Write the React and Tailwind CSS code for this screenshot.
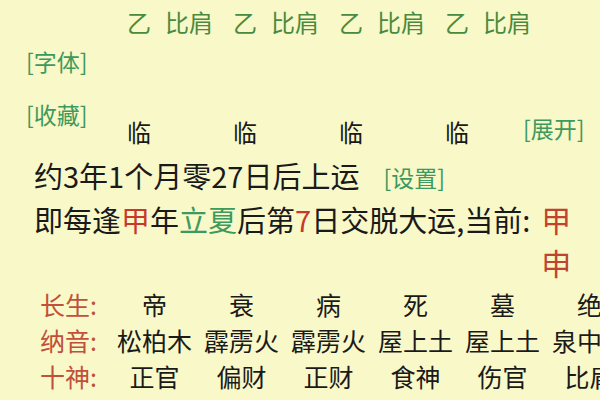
import React from "react";

const font = { fontFamily: '"Noto Sans CJK SC", "Noto Sans", sans-serif' };

function Row({ label, items }) {
  return (
    <div className="flex items-center h-[36px]">
      <div className="w-[111px] shrink-0 pl-[40px] text-[25px] text-[#c0503a] leading-none">{label}</div>
      {items.map((t, i) => (
        <div key={i} className="w-[87px] shrink-0 text-center text-[25px] text-[#1a1a1a] leading-none whitespace-nowrap">
          {t}
        </div>
      ))}
    </div>
  );
}

export default function App() {
  return (
    <div style={font} className="w-[600px] h-[400px] overflow-hidden bg-[#f9f8c9] flex flex-col">
      {/* Top row */}
      <div className="flex pl-[127px] pt-[4px] h-[40px] items-center">
        {[0, 1, 2, 3].map((i) => (
          <div key={i} className="w-[106px] shrink-0 flex items-center gap-[14px] text-[24px] leading-none text-[#4a8a3e] whitespace-nowrap">
            <span>乙</span>
            <span>比肩</span>
          </div>
        ))}
      </div>

      {/* Links + 临 row */}
      <div className="flex h-[110px]">
        <div className="w-[127px] shrink-0 pl-[26px] flex flex-col text-[23px] leading-none text-[#3d9a5e]">
          <div className="mt-[10px]">[字体]</div>
          <div className="mt-[30px]">[收藏]</div>
        </div>
        <div className="flex items-end pb-[6px]">
          {[0, 1, 2, 3].map((i) => (
            <div key={i} className="w-[106px] shrink-0 text-[24px] leading-none text-[#1a1a1a]">临</div>
          ))}
          <div className="ml-[-28px] text-[23px] leading-none text-[#3d9a5e] mb-[4px]">[展开]</div>
        </div>
      </div>

      {/* 约 line */}
      <div className="flex items-center pl-[34px] h-[48px] pt-[2px] whitespace-nowrap">
        <span className="text-[29px] leading-none text-[#1a1a1a]">约3年1个月零27日后上运</span>
        <span className="ml-[24px] mt-[4px] text-[23px] leading-none text-[#3d9a5e]">[设置]</span>
      </div>

      {/* 即 line */}
      <div className="flex items-start pl-[34px] whitespace-nowrap h-[82px]">
        <span className="text-[29px] leading-[42px] text-[#1a1a1a]">
          即每逢<span className="text-[#c8392b]">甲</span>年<span className="text-[#3d9a5e]">立夏</span>后第<span className="text-[#c8392b]">7</span>日交脱大运,当前:
        </span>
        <div className="ml-[11px] flex flex-col text-[30px] leading-[43px] text-[#c0432f]">
          <span>甲</span>
          <span>申</span>
        </div>
      </div>

      {/* Table */}
      <div className="flex flex-col mt-[6px]">
        <Row label="长生:" items={["帝", "衰", "病", "死", "墓", "绝"]} />
        <Row label="纳音:" items={["松柏木", "霹雳火", "霹雳火", "屋上土", "屋上土", "泉中水"]} />
        <Row label="十神:" items={["正官", "偏财", "正财", "食神", "伤官", "比肩"]} />
      </div>
    </div>
  );
}
